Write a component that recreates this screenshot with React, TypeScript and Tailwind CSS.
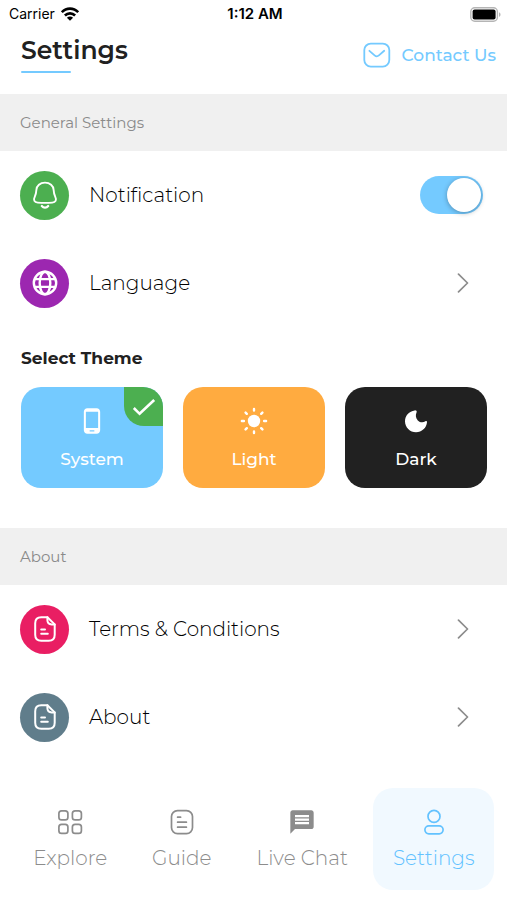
import { useState, type ReactNode } from "react";
import { MdMessage, MdPhoneAndroid } from "react-icons/md";

function WifiIcon() {
  return (
    <svg viewBox="0 0 18 14" className="h-[14px] w-[18px]" aria-hidden="true">
      <g fill="none" stroke="#000" strokeWidth="2.6">
        <path d="M0.8 5.2C5.400.4 12.600.4 17.200 5.200" />
        <path d="M3.900 8.500c2.900-2.900 7.300-2.900 10.200 0" />
      </g>
      <path d="M9 13.800 5.900 10.700c1.800-1.600 4.400-1.600 6.200 0z" />
    </svg>
  );
}

function BatteryIcon() {
  return (
    <svg viewBox="0 0 31 15" className="h-[15px] w-[31px]" aria-hidden="true">
      <rect x="0.8" y="0.8" width="26.6" height="13.4" rx="4" fill="#fff" stroke="#b5b5b5" strokeWidth="1.4" />
      <rect x="2.6" y="2.6" width="23" height="9.8" rx="2" />
      <path d="M29 5.2c2 .8 2 3.8 0 4.6z" fill="#b5b5b5" />
    </svg>
  );
}

function MailIcon() {
  return (
    <svg viewBox="0 0 28 26" className="h-[26px] w-7" fill="none" stroke="currentColor" strokeWidth="1.8" strokeLinecap="round" strokeLinejoin="round" aria-hidden="true">
      <rect x="1.3" y="1.6" width="25" height="23" rx="6.5" />
      <path d="m6.4 8.8 5.2 4.6c1.3 1.1 3 1.1 4.3 0l5.3-4.6" />
    </svg>
  );
}

function BellIcon() {
  return (
    <svg viewBox="0 0 28 30" className="h-[30px] w-7" fill="none" stroke="#fff" strokeWidth="1.9" strokeLinecap="round" strokeLinejoin="round" aria-hidden="true">
      <path d="M14 2.600c-5 0-8.400 3.100-8.600 7.200-.2 3.400-.6 4.800-1.600 6.800-1.900 3.700-.2 5.700 2.900 6 4.800.4 9.800.4 14.600 0 3.100-.3 4.800-2.300 2.900-6-1-2-1.400-3.400-1.600-6.800-.2-4.100-3.600-7.200-8.600-7.200z" />
      <path d="M10.800 26c1.700 2.200 4.700 2.200 6.400 0" strokeWidth="2.200" />
    </svg>
  );
}

function GlobeIcon() {
  return (
    <svg viewBox="0 0 26 26" className="h-[26px] w-[26px]" fill="none" stroke="#fff" strokeWidth="2.4" aria-hidden="true">
      <circle cx="13" cy="13" r="11.200" />
      <ellipse cx="13" cy="13" rx="5.300" ry="11.200" />
      <path d="M2.800 9.200h20.400M2.800 16.800h20.400" strokeWidth="2.200" />
    </svg>
  );
}

function FileIcon() {
  return (
    <svg viewBox="0 0 24 28" className="h-7 w-6" fill="none" stroke="#fff" strokeWidth="2" strokeLinecap="round" strokeLinejoin="round" aria-hidden="true">
      <path d="M14.400 2.300H8.200c-4 0-6 2-6 6v11.400c0 4 2 6 6 6h7.500c4 0 6-2 6-6V9.400z" />
      <path d="M14.400 2.300v2.800c0 3 1.400 4.300 4.300 4.300h3" />
      <path d="M8.200 14.400h3.800M8.200 18.800h6.600" />
    </svg>
  );
}

function Chevron() {
  return (
    <svg viewBox="0 0 12 20" className="h-5 w-3" fill="none" stroke="#8c8c8c" strokeWidth="1.700" strokeLinecap="round" strokeLinejoin="round" aria-hidden="true">
      <path d="m1.500 1.200 9 8.800-9 8.800" />
    </svg>
  );
}

function SunIcon() {
  return (
    <svg viewBox="0 0 28 28" className="h-7 w-7" fill="none" stroke="#fff" strokeWidth="2.400" strokeLinecap="round" aria-hidden="true">
      <circle cx="14" cy="14" r="6.200" fill="#fff" stroke="none" />
      <path d="M14 1.900v1.600M14 24.500v1.600M1.900 14h2M24.100 14h2M5.600 5.600l1.200 1.200M21.200 21.200l1.200 1.200M5.600 22.400l1.200-1.200M21.200 6.800l1.200-1.200" />
    </svg>
  );
}

function MoonIcon() {
  return (
    <svg viewBox="0 0 28 28" className="h-7 w-7" fill="#fff" aria-hidden="true">
      <path d="M12.700 3.400C7.200 4 3 8.600 3 14.200 3 20.400 8 25.200 14 25.200c5.800 0 10.500-4.200 11-9.900.1-1-.8-1.500-1.600-1-2.400 1.500-5.500 1.200-7.600-.9-2.100-2.100-2.500-5.300-1.200-8.100.6-1.100-.6-2.100-1.900-1.900z" />
    </svg>
  );
}

function GridIcon() {
  return (
    <svg viewBox="0 0 28 28" className="h-7 w-7" fill="none" stroke="currentColor" strokeWidth="1.700" aria-hidden="true">
      <rect x="2.900" y="2.900" width="9" height="9" rx="2.700" />
      <rect x="16.400" y="2.900" width="9" height="9" rx="2.700" />
      <rect x="2.900" y="16.400" width="9" height="9" rx="2.700" />
      <rect x="16.400" y="16.400" width="9" height="9" rx="2.700" />
    </svg>
  );
}

function GuideIcon() {
  return (
    <svg viewBox="0 0 28 28" className="h-7 w-7" fill="none" stroke="currentColor" strokeWidth="1.700" strokeLinecap="round" aria-hidden="true">
      <rect x="3.500" y="2.600" width="21" height="23" rx="6" />
      <path d="M9.600 9.200h3M9.600 14.200h8.800M9.600 19.200h8.800" />
    </svg>
  );
}

function PersonIcon() {
  return (
    <svg viewBox="0 0 28 28" className="h-7 w-7" fill="none" stroke="currentColor" strokeWidth="1.700" aria-hidden="true">
      <circle cx="14" cy="8.400" r="6" />
      <rect x="4.900" y="17.900" width="18.200" height="7.900" rx="3.950" />
    </svg>
  );
}

function SectionBar({ children }: { children: ReactNode }) {
  return (
    <h2 className="flex h-[57px] items-center bg-[#f0f0f0] px-5 text-[15px] leading-5 text-[#8a8a8a]">{children}</h2>
  );
}

const ROW = "flex h-[88px] w-full items-center gap-5 pl-5 pr-6 text-left";

function Disc({ color, children }: { color: string; children: ReactNode }) {
  return <span className={`flex size-[49px] shrink-0 items-center justify-center rounded-full ${color}`}>{children}</span>;
}

function RowLink({ color, icon, label }: { color: string; icon: ReactNode; label: string }) {
  return (
    <button type="button" className={ROW}>
      <Disc color={color}>{icon}</Disc>
      <span className="flex-1 text-xl font-light leading-7 text-black">{label}</span>
      <span className="flex w-10 justify-center">
        <Chevron />
      </span>
    </button>
  );
}

const THEMES = [
  { id: "System", color: "bg-[#74caff]", icon: <MdPhoneAndroid className="size-7" /> },
  { id: "Light", color: "bg-[#ffab40]", icon: <SunIcon /> },
  { id: "Dark", color: "bg-[#212121]", icon: <MoonIcon /> },
];

const TABS = [
  { id: "Explore", icon: <GridIcon /> },
  { id: "Guide", icon: <GuideIcon /> },
  { id: "Live Chat", icon: <MdMessage className="size-7" /> },
  { id: "Settings", icon: <PersonIcon /> },
];

export default function App() {
  const [notify, setNotify] = useState(true);
  const [theme, setTheme] = useState("System");
  const [tab, setTab] = useState("Settings");

  return (
    <div className="min-h-screen bg-white font-['Montserrat','Inter',sans-serif] text-[#212121]">
      <div className="grid h-7 grid-cols-3 items-center pl-[9px] pr-[6px] font-['Inter',sans-serif] text-[15px] leading-5 text-black">
        <span className="flex items-center gap-[6px] text-[14px]">
          Carrier <WifiIcon />
        </span>
        <span className="text-center font-semibold">1:12 AM</span>
        <span className="flex justify-end">
          <BatteryIcon />
        </span>
      </div>

      <header className="flex h-[66px] items-start justify-between pl-[21px] pr-[11px] pt-[6px]">
        <div>
          <h1 className="text-[25px] font-semibold leading-8">Settings</h1>
          <div className="mt-[5px] h-[2px] w-[50px] rounded-full bg-[#74caff]" />
        </div>
        <a href="#contact" className="mt-2 flex items-center gap-[11px] text-[17px] font-medium leading-[26px] text-[#74caff]">
          <MailIcon />
          Contact Us
        </a>
      </header>

      <main>
        <SectionBar>General Settings</SectionBar>
        <div className={ROW}>
          <Disc color="bg-[#4caf50]">
            <BellIcon />
          </Disc>
          <label htmlFor="notify" className="flex-1 text-xl font-light leading-7 text-black">
            Notification
          </label>
          <input
            id="notify"
            type="checkbox"
            role="switch"
            checked={notify}
            onChange={(e) => setNotify(e.target.checked)}
            className="flex h-[38px] w-[63px] shrink-0 appearance-none items-center rounded-full bg-gray-300 px-[2px] before:size-[34px] before:rounded-full before:bg-white before:shadow-[0_1px_5px_rgba(0,0,0,0.3)] before:content-[''] checked:justify-end checked:bg-[#74caff]"
          />
        </div>
        <RowLink color="bg-[#9c27b0]" icon={<GlobeIcon />} label="Language" />

        <fieldset className="pb-10 pl-[21px] pr-5 pt-[19px]">
          <legend className="contents">
            <span className="block text-[17px] font-bold leading-6">Select Theme</span>
          </legend>
          <div className="mt-[17px] grid grid-cols-3 gap-5">
            {THEMES.map((t) => (
              <label
                key={t.id}
                className={`relative flex cursor-pointer flex-col items-center gap-3 overflow-hidden rounded-[20px] pb-[17px] pt-5 text-[17px] font-medium leading-6 text-white ${t.color}`}
              >
                <input
                  type="radio"
                  name="theme"
                  className="sr-only"
                  checked={theme === t.id}
                  onChange={() => setTheme(t.id)}
                />
                {t.icon}
                {t.id}
                {theme === t.id && (
                  <span className="absolute right-0 top-0 flex size-[39px] items-center justify-center rounded-bl-[20px] bg-[#4caf50]">
                    <svg viewBox="0 0 24 20" className="h-5 w-6" fill="none" stroke="#fff" strokeWidth="2.600" aria-hidden="true">
                      <path d="m1.800 11 5.800 5.800L22.200 3" />
                    </svg>
                  </span>
                )}
              </label>
            ))}
          </div>
        </fieldset>

        <SectionBar>About</SectionBar>
        <RowLink color="bg-[#e91e63]" icon={<FileIcon />} label="Terms & Conditions" />
        <RowLink color="bg-[#607d8b]" icon={<FileIcon />} label="About" />
      </main>

      <nav className="grid grid-cols-[112fr_98fr_130fr_120fr] gap-[6px] pb-[10px] pl-[14px] pr-[13px] pt-[27px]">
        {TABS.map((t) => (
          <button
            key={t.id}
            type="button"
            onClick={() => setTab(t.id)}
            className={`flex flex-col items-center gap-2 rounded-[20px] pb-[18px] pt-5 text-xl font-light leading-7 ${
              tab === t.id ? "bg-[#f1f9ff] text-[#62c2ff]" : "text-[#8c8c8c]"
            }`}
          >
            {t.icon}
            <span className="whitespace-nowrap">{t.id}</span>
          </button>
        ))}
      </nav>
    </div>
  );
}
